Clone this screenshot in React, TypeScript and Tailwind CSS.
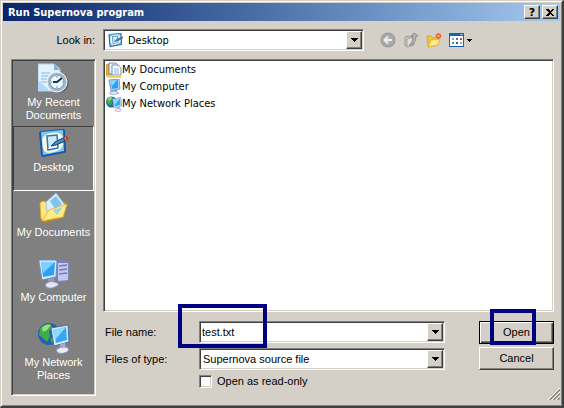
import React from "react";

const sunken =
  "border border-t-[#808080] border-l-[#808080] border-r-white border-b-white shadow-[inset_1px_1px_#404040,inset_-1px_-1px_#d4d0c8]";
const raised =
  "bg-[#d4d0c8] border border-t-white border-l-white border-r-[#404040] border-b-[#404040] shadow-[inset_-1px_-1px_#808080]";

type IconProps = { className: string };

function DesktopIcon({ className }: IconProps) {
  return (
    <svg className={className} viewBox="0 0 32 32" aria-hidden="true">
      <path d="M3 4Q1 4 1 6L3 28Q3 30 5 30L26 26Q28 26 28 24L27 4Q27 2 25 2Z" fill="#1558a8" />
      <path d="M3 5L25 3L26 24L5 28Z" fill="#7cc8f2" />
      <path d="M4 12Q7 6 14 6Q23 4 25 11L25 18Q23 24 15 25Q7 28 5 21Z" fill="#f8f7df" />
      <path d="M9 9L19 8L20 21L10 23Z" fill="#cfeafc" stroke="#2678bd" strokeWidth="1.5" />
      <path d="M10 22L19 13V20Z" fill="#fff" />
      <path d="M13 19L17 15L25 11L27 14L18 18Z" fill="#3f90cf" stroke="#123d69" strokeWidth="1" />
      <path d="M25 11L29 9L31 12L27 14Z" fill="#b93a2a" />
      <path d="M27 10L28 13" stroke="#e9a05a" />
    </svg>
  );
}

function RecentIcon({ className }: IconProps) {
  return (
    <svg className={className} viewBox="0 0 32 32" aria-hidden="true">
      <path d="M0 2H16L22 7V29H0Z" fill="#e6f2ff" stroke="#a9cdf0" />
      <path d="M0 18L12 29H0Z" fill="#b5d8f8" />
      <path d="M16 2V8H22Z" fill="#7fb0e4" />
      <path d="M3 11H12M3 14H10M3 17H9M3 20H9" stroke="#7fb4ea" />
      <circle cx="21" cy="21" r="10" fill="#5a6a78" />
      <circle cx="19" cy="20" r="10" fill="#a9bccb" stroke="#edf5fa" />
      <circle cx="19" cy="20" r="7" fill="#eef9ff" stroke="#7891a5" />
      <path d="M15 20H19L24 16" stroke="#12324f" strokeWidth="2" fill="none" />
      <path d="M19 14V16M19 24V26M13 20H14M24 20H25" stroke="#4b9fc0" />
    </svg>
  );
}

function DocumentsIcon({ className }: IconProps) {
  return (
    <svg className={className} viewBox="0 0 32 32" aria-hidden="true">
      <path d="M3 12L6 8L11 10L14 13L27 9L29 12L26 26L6 31L3 28Z" fill="#b8871f" />
      <path d="M2 11L5 9L12 12L8 29L3 27Z" fill="#ffe679" stroke="#d9a632" strokeWidth=".8" />
      <path d="M8 10L18 1L27 13L18 23L9 20Z" fill="#d8effd" stroke="#8abbe0" strokeWidth=".8" />
      <path d="M12 9L18 4L24 12L17 17Z" fill="#82c3ec" />
      <path d="M4 29L11 18L29 12L25 25Z" fill="#ffeb86" stroke="#e0ae3c" strokeWidth=".8" />
      <path d="M15 18L25 15L19 23Z" fill="#9ed3e6" />
    </svg>
  );
}

function ComputerIcon({ className }: IconProps) {
  return (
    <svg className={className} viewBox="0 0 32 32" aria-hidden="true">
      <path d="M18 5L21 2L30 4L32 6V23L24 26L18 22Z" fill="#7d80b6" />
      <path d="M20 6L30 6V23L20 24Z" fill="#c3c9ee" />
      <path d="M21 9L29 8M21 13L29 12M21 17L29 16" stroke="#747bb5" strokeWidth="1.5" />
      <path d="M1 3L17 3Q19 3 19 5L18 20L4 23L1 5Z" fill="#d5eafa" stroke="#6d8ac5" />
      <path d="M3 5L17 5L16 18L5 20Z" fill="#319ff0" />
      <path d="M3 5L17 5L5 16Z" fill="#7dd0ff" />
      <path d="M10 22L16 21L17 26L11 27Z" fill="#929fc7" />
      <path d="M7 28Q10 23 17 25Q23 27 19 29Q13 33 8 30Z" fill="#e3e6f8" stroke="#8888b7" />
    </svg>
  );
}

function NetworkIcon({ className }: IconProps) {
  return (
    <svg className={className} viewBox="0 0 32 32" aria-hidden="true">
      <circle cx="11" cy="12" r="11" fill="#2360b0" />
      <path d="M2 7Q5 2 12 2L15 6L11 9L12 14L9 20L5 16L1 13ZM12 16L16 17L14 22Z" fill="#3fac48" />
      <path d="M4 6Q8 1 13 3L9 8L5 10Z" fill="#9ade82" />
      <path d="M13 6L30 3L31 20L16 24Z" fill="#d6edff" stroke="#4a70ac" />
      <path d="M15 8L28 5L29 18L18 21Z" fill="#38a8ee" />
      <path d="M15 8L28 5L17 18Z" fill="#8bdbfc" />
      <path d="M22 22L27 21L28 27L23 28Z" fill="#a4b0d7" />
      <path d="M18 28Q22 24 28 25Q33 27 29 30Q22 33 19 30Z" fill="#ebebfa" stroke="#8d8cba" />
    </svg>
  );
}

function PapersIcon({ className }: IconProps) {
  return (
    <svg className={className} viewBox="0 0 16 16" aria-hidden="true">
      <path d="M0 3L3 2V13L14 12L15 15H2L0 13Z" fill="#edb637" stroke="#b57b17" strokeWidth=".7" />
      <path d="M3 1H10L12 3V12H3Z" fill="#e7f3ff" stroke="#507fae" strokeWidth=".8" />
      <path d="M6 3H12L15 6V13H6Z" fill="#f8fcff" stroke="#507fae" strokeWidth=".8" />
      <path d="M8 7H13M8 9H13M8 11H13" stroke="#73a7d8" strokeWidth=".8" />
      <path d="M1 13H15V15H2Z" fill="#f7cc55" />
    </svg>
  );
}

function SmallComputerIcon({ className }: IconProps) {
  return (
    <svg className={className} viewBox="0 0 16 16" aria-hidden="true">
      <path d="M3 1L13 0L14 10L5 12Z" fill="#a9d5f5" stroke="#6284b8" strokeWidth=".8" />
      <path d="M5 2L12 1L12 9L6 10Z" fill="#2da1ee" />
      <path d="M5 2L11 1L6 7Z" fill="#90dcff" />
      <path d="M8 11H11V13H8Z" fill="#8391bb" />
      <path d="M4 13L9 12L13 14L8 16L4 15Z" fill="#dfe6f7" stroke="#8b9abf" strokeWidth=".7" />
    </svg>
  );
}

function Arrow() {
  return (
    <svg className="h-1 w-[7px]" viewBox="0 0 7 4" shapeRendering="crispEdges" aria-hidden="true">
      <path d="M0 0H7L4 4H3Z" fill="#000" />
    </svg>
  );
}

const places = [
  { label: "My Recent Documents", Icon: RecentIcon },
  { label: "Desktop", Icon: DesktopIcon, active: true },
  { label: "My Documents", Icon: DocumentsIcon },
  { label: "My Computer", Icon: ComputerIcon },
  { label: "My Network Places", Icon: NetworkIcon },
];

const files = [
  { label: "My Documents", Icon: PapersIcon },
  { label: "My Computer", Icon: SmallComputerIcon },
  { label: "My Network Places", Icon: NetworkIcon },
];

function SelectBox({ id, option, icon }: { id: string; option: string; icon?: React.ReactNode }) {
  return (
    <div className={`grid h-[22px] min-w-0 grid-cols-[1fr_16px] items-center bg-white p-px ${sunken}`}>
      <div className="col-span-2 col-start-1 row-start-1 flex h-full items-center gap-[2px]">
        {icon}
        <select id={id} className="h-full min-w-0 flex-1 appearance-none bg-transparent pl-[2px] outline-none">
          <option>{option}</option>
        </select>
      </div>
      <span className={`pointer-events-none col-start-2 row-start-1 flex h-full items-center justify-center ${raised}`}>
        <Arrow />
      </span>
    </div>
  );
}

function Toolbar() {
  return (
    <div className="flex items-center gap-[7px]">
      <button aria-label="Back" className="h-4 w-4">
        <svg className="h-4 w-4" viewBox="0 0 16 16">
          <circle cx="8" cy="8" r="7.5" fill="#999" />
          <circle cx="8" cy="8" r="6.3" fill="#aaa" />
          <path d="M12 8H5M8 4.5L4.5 8L8 11.5" fill="none" stroke="#eee" strokeWidth="2" />
        </svg>
      </button>
      <button aria-label="Up one level" className="h-4 w-4">
        <svg className="h-4 w-4" viewBox="0 0 16 16">
          <path d="M2 5L6 4L7 5L11 4V13L4 15L2 13Z" fill="#c6c6c2" stroke="#999" />
          <path d="M4 7L10 5L9 13L4 15Z" fill="#ddd" stroke="#a4a4a4" />
          <path d="M6 13Q10 11 10 4H8L11 1L15 4H13Q13 12 6 13Z" fill="#b4b4b4" stroke="#858585" strokeWidth=".8" />
        </svg>
      </button>
      <button aria-label="Create new folder" className="h-4 w-4">
        <svg className="h-4 w-4" viewBox="0 0 16 16">
          <path d="M1 4L5 4L7 6L12 5L12 13L2 15Z" fill="#f1c444" stroke="#d49d28" strokeWidth=".8" />
          <path d="M2 15L5 8L14 7L12 13Z" fill="#ffeb87" stroke="#e1ac34" strokeWidth=".8" />
          <path d="M12.5 1V7M9.500 4H15.500M10.500 2L14.500 6M10.500 6L14.500 2" stroke="#ed5a25" strokeWidth="1.4" />
          <circle cx="12.5" cy="4" r="1.3" fill="#ffb24e" />
        </svg>
      </button>
      <button aria-label="View menu" className="flex h-4 w-6 items-center gap-[2px]">
        <svg className="h-4 w-4 shrink-0" viewBox="0 0 16 16" shapeRendering="crispEdges">
          <path d="M0 1H15V15H0Z" fill="#1761b7" />
          <path d="M1 4H14V14H1Z" fill="#fff" />
          <path d="M11 2H14V3H11Z" fill="#8bbfee" />
          <path d="M3 6H5V8H3ZM11 10H13V12H11Z" fill="#91a4bd" />
          <path d="M7 6H9V8H7Z" fill="#477ebc" />
          <path d="M11 6H13V8H11Z" fill="#b65348" />
          <path d="M3 10H5V12H3Z" fill="#4a9552" />
          <path d="M7 10H9V12H7Z" fill="#55545e" />
        </svg>
        <svg className="h-[3px] w-[5px]" viewBox="0 0 5 3" shapeRendering="crispEdges">
          <path d="M0 0H5L3 3H2Z" />
        </svg>
      </button>
    </div>
  );
}

export default function App() {
  return (
    <main className="min-h-screen border-t border-r-2 border-b-2 border-l border-t-[#d4d0c8] border-r-[#404040] border-b-[#404040] border-l-[#d4d0c8] bg-[#d4d0c8] pr-[2px] pb-[10px] pl-[2px] font-['Liberation_Sans',Arial,sans-serif] text-[11px] leading-[13px] text-black shadow-[inset_1px_1px_#fff,inset_-1px_-1px_#808080]">
      <header className="mt-[2px] flex h-[18px] items-center bg-linear-to-r from-[#0a246a] to-[#a6caf0] pr-[2px] pl-[5px]">
        <h1 className="flex-1 font-['DejaVu_Sans_Condensed','DejaVu_Sans',sans-serif] text-[11px] font-bold text-white">
          Run Supernova program
        </h1>
        <div className="flex gap-[2px]">
          <button aria-label="Help" className={`flex h-[14px] w-4 items-center justify-center font-['DejaVu_Sans',sans-serif] text-[11px] font-bold ${raised}`}>
            ?
          </button>
          <button aria-label="Close" className={`flex h-[14px] w-4 items-center justify-center ${raised}`}>
            <svg className="h-[7px] w-2" viewBox="0 0 8 7" shapeRendering="crispEdges">
              <path d="M0 0H2L4 2L6 0H8L5 3.5L8 7H6L4 5L2 7H0L3 3.5Z" />
            </svg>
          </button>
        </div>
      </header>

      <div className="mt-2 flex items-center pr-2 pl-2">
        <label htmlFor="look-in" className="w-[92px] shrink-0 pr-2 text-right">
          Look in:
        </label>
        <div className="min-w-0 flex-1 font-['DejaVu_Sans_Condensed',sans-serif]">
          <SelectBox id="look-in" option="Desktop" icon={<DesktopIcon className="ml-[3px] h-4 w-4 shrink-0" />} />
        </div>
        <div className="ml-4 w-[172px] shrink-0">
          <Toolbar />
        </div>
      </div>

      <div className="mt-2 flex items-start gap-[7px] pr-[6px] pl-2">
        <nav className={`flex h-[337px] w-[85px] shrink-0 flex-col bg-[#808080] p-px ${sunken}`}>
          {places.map(({ label, Icon, active }) => (
            <button
              key={label}
              className={`flex h-[65px] shrink-0 flex-col items-center gap-[2px] border text-white ${
                active ? "border-t-[#404040] border-r-white border-b-white border-l-[#404040]" : "border-transparent"
              }`}
            >
              <Icon className="h-8 w-8 shrink-0" />
              <span>{label}</span>
            </button>
          ))}
        </nav>

        <div className="min-w-0 flex-1">
          <ul className={`h-[253px] bg-white px-[2px] py-px font-['DejaVu_Sans_Condensed',sans-serif] ${sunken}`}>
            {files.map(({ label, Icon }) => (
              <li key={label} className="flex h-[17px] items-center">
                <Icon className="h-4 w-4 shrink-0" />
                {label}
              </li>
            ))}
          </ul>

          <form className="mt-[9px] flex gap-[34px]" onSubmit={(e) => e.preventDefault()}>
            <div className="grid min-w-0 flex-1 grid-cols-[96px_1fr] items-center gap-y-[5px]">
              <label htmlFor="file-name" className="pl-[2px]">
                File name:
              </label>
              <div className={`relative flex h-[22px] min-w-0 bg-white p-px ${sunken}`}>
                <input id="file-name" defaultValue="test.txt" className="min-w-0 flex-1 bg-transparent pl-px outline-none" />
                <button type="button" aria-label="Show file names" className={`flex w-4 items-center justify-center ${raised}`}>
                  <Arrow />
                </button>
                <span className="pointer-events-none absolute -top-[18px] -left-[22px] h-11 w-[89px] border-4 border-[#000080]" />
              </div>
              <label htmlFor="file-type" className="pl-[2px]">
                Files of type:
              </label>
              <SelectBox id="file-type" option="Supernova source file" />
              <label className="col-start-2 flex items-center gap-[5px]">
                <input type="checkbox" className={`h-[13px] w-[13px] appearance-none bg-white ${sunken}`} />
                Open as read-only
              </label>
            </div>
            <div className="flex w-[75px] shrink-0 flex-col gap-[3px]">
              <button
                type="submit"
                className="relative h-[23px] border border-black bg-[#d4d0c8] shadow-[inset_1px_1px_#fff,inset_-1px_-1px_#404040,inset_-2px_-2px_#808080]"
              >
                Open
                <span className="pointer-events-none absolute -top-[13px] left-[10px] h-9 w-[46px] border-4 border-[#000080]" />
              </button>
              <button type="button" className={`h-[23px] ${raised}`}>
                Cancel
              </button>
            </div>
          </form>
          <svg className="-mb-2 ml-auto h-3 w-3 translate-x-[6px]" viewBox="0 0 12 12" aria-hidden="true">
            <path d="M0 12L12 0M4 12L12 4M8 12L12 8" stroke="#fff" />
            <path d="M1.5 12L12 1.5M5.5 12L12 5.5M9.5 12L12 9.5" stroke="#808080" strokeWidth="1.3" />
          </svg>
        </div>
      </div>
    </main>
  );
}
